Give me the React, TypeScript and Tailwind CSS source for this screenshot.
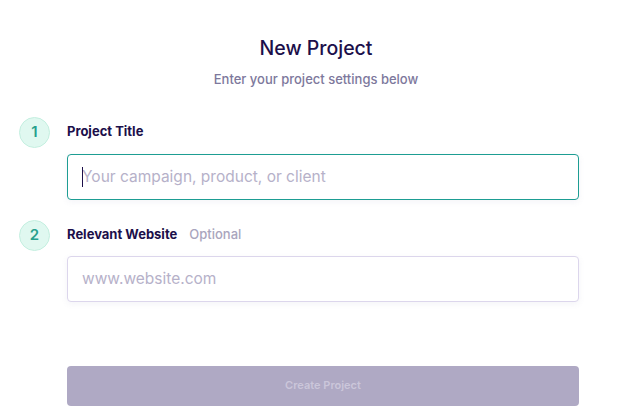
import React from 'react';

const StepBadge: React.FC<{ n: number }> = ({ n }) => (
  <div className="flex h-[31px] w-[31px] shrink-0 items-center justify-center rounded-full border border-[#c4efe0] bg-[#e0f8f0] text-[15px] font-semibold text-[#27a08c]">
    {n}
  </div>
);

const App: React.FC = () => {
  return (
    <div
      className="min-h-[411px] w-full bg-white"
      style={{ fontFamily: 'Inter, "Noto Sans", sans-serif' }}
    >
      <div className="flex flex-col items-center pt-[36px]">
        <h1 className="text-[19.5px] font-medium leading-6 text-[#1c0f4a]">New Project</h1>
        <p className="mt-[10px] text-[13px] font-medium text-[#7d789c]">Enter your project settings below</p>
      </div>

      <div className="mt-[27px] pl-[19px] pr-[53px]">
        <div className="flex items-center gap-[17px]">
          <StepBadge n={1} />
          <span className="text-[13px] font-bold text-[#1c0f4a]">Project Title</span>
        </div>
        <div className="relative ml-[48px] mt-[6px]">
          <input
            placeholder="Your campaign, product, or client"
            className="h-[46px] w-full rounded-[4px] border border-[#1d9d93] bg-white px-[14px] text-[15.5px] text-[#1c0f4a] shadow-[0_2px_6px_rgba(120,110,170,0.08)] outline-none placeholder:text-[#b6b1c9]"
          />
          <span className="absolute left-[15px] top-[13px] h-[20px] w-px bg-[#1c0f4a]" />
        </div>

        <div className="mt-[20px] flex items-center gap-[17px]">
          <StepBadge n={2} />
          <span className="text-[13px] font-bold text-[#1c0f4a]">Relevant Website</span>
          <span className="-ml-[5px] text-[13px] font-medium text-[#a9a5bd]">Optional</span>
        </div>
        <div className="ml-[48px] mt-[5px]">
          <input
            placeholder="www.website.com"
            className="h-[46px] w-full rounded-[4px] border border-[#dcd6ec] bg-white px-[14px] text-[15.5px] text-[#1c0f4a] shadow-[0_2px_6px_rgba(120,110,170,0.08)] outline-none placeholder:text-[#b6b1c9]"
          />
        </div>

        <div className="ml-[48px] mt-[64px]">
          <button className="h-[40px] w-full rounded-[4px] bg-[#afa9c4] text-[11px] font-semibold text-[#cbc6da]">
            Create Project
          </button>
        </div>
      </div>
    </div>
  );
};

export default App;
